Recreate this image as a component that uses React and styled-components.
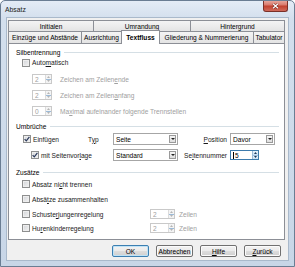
import React from 'react'
import styled, { createGlobalStyle } from 'styled-components'

// * Global
const GlobalStyle = createGlobalStyle`
  html, body {
    margin: 0;
    padding: 0;
    background: #ffffff;
  }
  body {
    font-family: "Liberation Sans", Arial, sans-serif;
    font-size: 6.6px;
    color: #1a1a1a;
  }
  * {
    box-sizing: border-box;
  }
`

// Small pieces
const CheckMark = () => (
  <svg width='6' height='6' viewBox='0 0 6 6'>
    <path d='M0.6 3.1 L2.3 4.9 L5.4 0.8' fill='none' stroke='#2b3a5c' strokeWidth='1.2' />
  </svg>
)

const Check = ({ checked }) => <CheckBoxStyled>{checked && <CheckMark />}</CheckBoxStyled>

const Spin = ({ value, width, active, caret }) => (
  <SpinStyled width={width} active={active}>
    <SpinValue active={active}>
      {caret && <Caret />}
      {value}
    </SpinValue>
    <SpinButtons active={active}>
      <SpinHalf active={active}>
        <svg width='3' height='2' viewBox='0 0 3 2'>
          <path d='M0 2 L1.5 0 L3 2 Z' fill={active ? '#1e395b' : '#b5b5b5'} />
        </svg>
      </SpinHalf>
      <SpinHalf active={active}>
        <svg width='3' height='2' viewBox='0 0 3 2'>
          <path d='M0 0 L1.5 2 L3 0 Z' fill={active ? '#1e395b' : '#b5b5b5'} />
        </svg>
      </SpinHalf>
    </SpinButtons>
  </SpinStyled>
)

const Select = ({ value, width }) => (
  <SelectStyled width={width}>
    <span>{value}</span>
    <SelectArrow>
      <svg width='4' height='2' viewBox='0 0 4 2'>
        <path d='M0 0 L2 2 L4 0 Z' fill='#222' />
      </svg>
    </SelectArrow>
  </SelectStyled>
)

const App = () => {
  return (
    <>
      <GlobalStyle />
      <WindowStyled>
        <TitleBarStyled>
          <TitleStyled>Absatz</TitleStyled>
          <CloseStyled>
            <svg width='7' height='6' viewBox='0 0 7 6'>
              <path d='M1 0.8 L6 5.2 M6 0.8 L1 5.2' stroke='#6e1f17' strokeWidth='2.2' />
              <path d='M1 0.8 L6 5.2 M6 0.8 L1 5.2' stroke='#ffffff' strokeWidth='1.3' />
            </svg>
          </CloseStyled>
        </TitleBarStyled>

        <ClientStyled>
          <TabRowStyled h={11}>
            <TabStyled w={86}>Initialen</TabStyled>
            <TabStyled w={98}>Umrandung</TabStyled>
            <TabStyled w={95}>Hintergrund</TabStyled>
          </TabRowStyled>
          <TabRowStyled h={12} lower>
            <TabStyled w={74}>Einzüge und Abstände</TabStyled>
            <TabStyled w={41}>Ausrichtung</TabStyled>
            <TabStyled w={39} selected>
              Textfluss
            </TabStyled>
            <TabStyled w={95}>Gliederung &amp; Nummerierung</TabStyled>
            <TabStyled w={32}>Tabulator</TabStyled>
          </TabRowStyled>

          <PanelStyled>
            <SectionStyled>Silbentrennung</SectionStyled>
            <RowStyled h={11} indent={6}>
              <Check />
              <span>
                Auto<U>m</U>atisch
              </span>
            </RowStyled>
            <RowStyled h={16} mt={3} indent={16} gap={8} disabled>
              <Spin value='2' width={20} />
              <span>
                Zeichen am Zeilen<U>e</U>nde
              </span>
            </RowStyled>
            <RowStyled h={16} indent={16} gap={8} disabled>
              <Spin value='2' width={20} />
              <span>
                Zeichen am Zeilen<U>a</U>nfang
              </span>
            </RowStyled>
            <RowStyled h={16} indent={16} gap={8} disabled>
              <Spin value='0' width={20} />
              <span>
                Ma<U>x</U>imal aufeinander folgende Trennstellen
              </span>
            </RowStyled>

            <SectionStyled mt={2}>Umbrüche</SectionStyled>
            <BreakGridStyled>
              <CellStyled indent={7}>
                <Check checked />
                <span>Einfügen</span>
              </CellStyled>
              <span>
                T<U>y</U>p
              </span>
              <Select value='Seite' width={65} />
              <FieldLabelStyled>
                <U>P</U>osition
              </FieldLabelStyled>
              <Select value='Davor' width={45} />

              <CellStyled indent={15}>
                <Check checked />
                <span>
                  mit Seitenvor<U>l</U>age
                </span>
              </CellStyled>
              <span />
              <Select value='Standard' width={65} />
              <FieldLabelStyled>
                Se<U>i</U>tennummer
              </FieldLabelStyled>
              <Spin value='5' width={29} active caret />
            </BreakGridStyled>

            <SectionStyled mt={6}>Zusätze</SectionStyled>
            <RowStyled h={12} mt={1} indent={6}>
              <Check />
              <span>
                Absatz ni<U>c</U>ht trennen
              </span>
            </RowStyled>
            <RowStyled h={12} mt={3} indent={6}>
              <Check />
              <span>
                Absä<U>t</U>ze zusammenhalten
              </span>
            </RowStyled>
            <RowStyled h={12} mt={3} indent={6} gap={0}>
              <CellStyled w={128}>
                <Check />
                <span>
                  Schuste<U>r</U>jungenregelung
                </span>
              </CellStyled>
              <Spin value='2' width={25} />
              <MutedStyled>Zeilen</MutedStyled>
            </RowStyled>
            <RowStyled h={12} mt={2} indent={6} gap={0}>
              <CellStyled w={128}>
                <Check />
                <span>
                  Hu<U>r</U>enkinderregelung
                </span>
              </CellStyled>
              <Spin value='2' width={25} />
              <MutedStyled>Zeilen</MutedStyled>
            </RowStyled>
          </PanelStyled>

          <ButtonBarStyled>
            <ButtonStyled primary>OK</ButtonStyled>
            <ButtonStyled>Abbrechen</ButtonStyled>
            <ButtonStyled>
              <U>H</U>ilfe
            </ButtonStyled>
            <ButtonStyled>
              <U>Z</U>urück
            </ButtonStyled>
          </ButtonBarStyled>
        </ClientStyled>
      </WindowStyled>
    </>
  )
}

const WindowStyled = styled.div`
  width: 295px;
  height: 267px;
  display: flex;
  flex-direction: column;
  border: 1px solid #6a7d93;
  border-radius: 5px 5px 0 0;
  background: linear-gradient(#e4ecf6, #d3dfed 18px, #c8d6e7);
  overflow: hidden;
`

const TitleBarStyled = styled.div`
  height: 16px;
  display: flex;
  justify-content: space-between;
  align-items: flex-start;
`

const TitleStyled = styled.div`
  padding: 5px 0 0 4px;
  font-size: 6.8px;
  color: #1a1a1a;
`

const CloseStyled = styled.div`
  width: 25px;
  height: 12px;
  margin: -1px 6px 0 0;
  border: 1px solid #7a3028;
  border-top: none;
  border-radius: 0 0 3px 3px;
  background: linear-gradient(#eab0a6, #d97a6d 45%, #c2412f 55%, #cf6a5b);
  display: flex;
  align-items: center;
  justify-content: center;
`

const ClientStyled = styled.div`
  flex: 1;
  margin: 0 5px 5px;
  border: 1px solid #a9b9cb;
  background: #f0f0f0;
  padding: 2px 3px 3px 1px;
  display: flex;
  flex-direction: column;
`

const TabRowStyled = styled.div`
  display: flex;
  height: ${(p) => p.h}px;
  flex: none;
  & > div:first-child {
    margin-left: 0;
  }
`

const TabStyled = styled.div`
  width: ${(p) => p.w}px;
  flex: none;
  margin-left: -1px;
  border: 1px solid #8c8f96;
  border-bottom: none;
  background: ${(p) => (p.selected ? '#ffffff' : 'linear-gradient(#f4f4f4, #e4e4e4)')};
  font-weight: ${(p) => (p.selected ? 'bold' : 'normal')};
  display: flex;
  align-items: center;
  justify-content: center;
  white-space: nowrap;
  overflow: hidden;
  color: #000;
  ${(p) =>
    p.selected &&
    `
    margin-top: -1px;
    margin-bottom: -1px;
    position: relative;
    z-index: 1;
  `}
`

const PanelStyled = styled.div`
  width: 277px;
  height: 197px;
  flex: none;
  border: 1px solid #8c8f96;
  background: #ffffff;
  padding: 3px 5px 0 7px;
  display: flex;
  flex-direction: column;
`

const SectionStyled = styled.div`
  height: 10px;
  margin-top: ${(p) => p.mt || 0}px;
  display: flex;
  align-items: center;
  gap: 4px;
  color: #000;
  &::after {
    content: '';
    flex: 1;
    height: 1px;
    background: #d5dfe5;
  }
`

const RowStyled = styled.div`
  height: ${(p) => p.h}px;
  margin-top: ${(p) => p.mt || 0}px;
  padding-left: ${(p) => p.indent || 0}px;
  display: flex;
  align-items: center;
  gap: ${(p) => (p.gap === undefined ? 2 : p.gap)}px;
  color: ${(p) => (p.disabled ? '#a0a0a0' : '#1a1a1a')};
  white-space: nowrap;
`

const CellStyled = styled.div`
  display: flex;
  align-items: center;
  gap: 2px;
  padding-left: ${(p) => p.indent || 0}px;
  width: ${(p) => (p.w ? `${p.w}px` : 'auto')};
  flex: none;
  white-space: nowrap;
`

const BreakGridStyled = styled.div`
  margin-top: 2px;
  display: grid;
  grid-template-columns: 72px 25px 65px 52px 45px;
  grid-template-rows: 12px 12px;
  row-gap: 4px;
  align-items: center;
  color: #1a1a1a;
`

const FieldLabelStyled = styled.span`
  justify-self: end;
  padding-right: 3px;
  white-space: nowrap;
`

const MutedStyled = styled.span`
  color: #a0a0a0;
  margin-left: 4px;
`

const U = styled.span`
  text-decoration: underline;
`

const CheckBoxStyled = styled.span`
  width: 8px;
  height: 8px;
  flex: none;
  border: 1px solid #8e8f8f;
  background: linear-gradient(135deg, #d2d4d8, #f3f3f3);
  box-shadow: inset 0 0 0 1px #eeeeee;
  display: flex;
  align-items: center;
  justify-content: center;
`

const SpinStyled = styled.div`
  width: ${(p) => p.width}px;
  height: 10px;
  flex: none;
  display: flex;
  border: 1px solid ${(p) => (p.active ? '#3d7bad' : '#c9c9c9')};
  background: #ffffff;
`

const SpinValue = styled.div`
  flex: 1;
  display: flex;
  align-items: center;
  padding-left: 2px;
  color: ${(p) => (p.active ? '#000' : '#a0a0a0')};
`

const Caret = styled.span`
  width: 1px;
  height: 7px;
  background: #000;
  margin-right: 1px;
`

const SpinButtons = styled.div`
  width: 6px;
  display: flex;
  flex-direction: column;
  border-left: 1px solid ${(p) => (p.active ? '#9cbbd9' : '#dcdcdc')};
`

const SpinHalf = styled.div`
  flex: 1;
  display: flex;
  align-items: center;
  justify-content: center;
  background: ${(p) => (p.active ? 'linear-gradient(#eaf4fc, #c8e0f5)' : '#f4f4f4')};
  & + & {
    border-top: 1px solid ${(p) => (p.active ? '#9cbbd9' : '#dcdcdc')};
  }
`

const SelectStyled = styled.div`
  width: ${(p) => p.width}px;
  height: 12px;
  display: flex;
  align-items: center;
  justify-content: space-between;
  border: 1px solid #a6a6a6;
  background: #ffffff;
  padding: 0 1px 0 2px;
  color: #000;
`

const SelectArrow = styled.span`
  width: 7px;
  height: 8px;
  border: 1px solid #9a9a9a;
  background: linear-gradient(#f6f6f6, #dedede);
  display: flex;
  align-items: center;
  justify-content: center;
`

const ButtonBarStyled = styled.div`
  margin-top: 5px;
  padding-right: 4px;
  display: flex;
  justify-content: flex-end;
  gap: 7px;
`

const ButtonStyled = styled.div`
  width: 37px;
  height: 12px;
  border: 1px solid ${(p) => (p.primary ? '#3c7fb1' : '#707070')};
  border-radius: 2px;
  background: linear-gradient(#f2f2f2, #ebebeb 50%, #dddddd 51%, #cfcfcf);
  box-shadow: inset 0 0 0 1px ${(p) => (p.primary ? '#bfe3f7' : '#fbfbfb')};
  display: flex;
  align-items: center;
  justify-content: center;
  color: #000;
`

export default App
